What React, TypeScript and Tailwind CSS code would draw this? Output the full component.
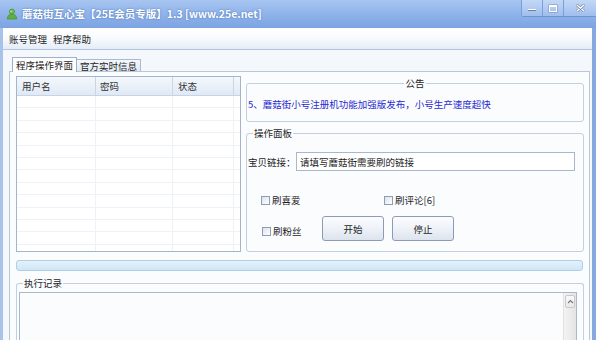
import React from "react";

const rows = Array.from({ length: 13 });

function Check({ label }: { label: string }) {
  return (
    <div className="flex items-center h-[14px]">
      <span className="w-[9px] h-[9px] border border-[#8e9db2] bg-gradient-to-br from-[#dde3eb] to-white shrink-0" />
      <span className="ml-[2px]">{label}</span>
    </div>
  );
}

function Btn({ label }: { label: string }) {
  return (
    <button className="w-[62px] h-[25px] rounded-[3px] border border-[#8d9cb4] bg-gradient-to-b from-[#fbfcfe] via-[#eef2f8] to-[#dde4ee] flex items-center justify-center text-[#1e1e1e]">
      {label}
    </button>
  );
}

export default function App() {
  return (
    <div className="w-[596px] h-[353px] bg-white overflow-hidden [font-family:'Noto_Sans_CJK_SC',sans-serif] text-[9.5px] leading-[14px] text-[#1e1e1e]">
      <div className="h-[340px] flex flex-col overflow-hidden">
        {/* title bar */}
        <div className="h-[28px] shrink-0 flex bg-gradient-to-b from-[#a7c5f1] via-[#8fb3ea] to-[#7da4e3]">
          <div className="flex items-center pl-[6px]">
            <svg width="12" height="12" viewBox="0 0 12 12">
              <circle cx="6" cy="3.6" r="2.6" fill="#6cc04a" stroke="#3f8a2a" strokeWidth="0.6" />
              <path d="M1.2 11 C1.6 7.4 3.4 6.2 6 6.2 C8.6 6.2 10.4 7.4 10.8 11 Z" fill="#5bb23c" stroke="#3f8a2a" strokeWidth="0.6" />
              <circle cx="5" cy="3.3" r="0.6" fill="#fff" />
            </svg>
            <span className="ml-[4px] text-white font-bold text-[10.5px] leading-[14px] [text-shadow:0_0_2px_#3e68ad]">
              蘑菇街互心宝【25E会员专版】1.3 [www.25e.net]
            </span>
          </div>
          <div className="ml-auto flex h-[17px] border-b border-[#6f93cc] rounded-bl-[3px] overflow-hidden">
            <div className="w-[21px] flex items-end justify-center pb-[5px] bg-gradient-to-b from-[#c3d8f6] to-[#9fbeee] border-l border-[#7b9ed6]">
              <span className="w-[8px] h-[2px] bg-white border-b border-[#6e7f99]" />
            </div>
            <div className="w-[21px] flex items-center justify-center bg-gradient-to-b from-[#c3d8f6] to-[#9fbeee] border-l border-[#7b9ed6]">
              <span className="w-[8px] h-[7px] border border-white border-t-2 shadow-[0_0_0_0.5px_#7a8ca8]" />
            </div>
            <div className="w-[33px] flex items-center justify-center bg-gradient-to-b from-[#c3d8f6] to-[#9fbeee] border-l border-[#7b9ed6]">
              <svg width="9" height="8" viewBox="0 0 9 8">
                <path d="M1 1 L8 7 M8 1 L1 7" stroke="#6d7f9b" strokeWidth="2.6" strokeLinecap="round" />
                <path d="M1 1 L8 7 M8 1 L1 7" stroke="#fff" strokeWidth="1.5" strokeLinecap="round" />
              </svg>
            </div>
          </div>
        </div>

        {/* body */}
        <div className="flex-1 min-h-0 flex flex-col bg-[#f4f7fb] border-l-[3px] border-r-[4px] border-l-[#a8c3ea] border-r-[#86a9df]">
          {/* menu */}
          <div className="h-[22px] shrink-0 flex items-center gap-[6px] pl-[6px] bg-gradient-to-b from-white via-[#f8fafd] to-[#e4ecf7] border-b border-[#b3c4de]">
            <span>账号管理</span>
            <span>程序帮助</span>
          </div>

          {/* tabs */}
          <div className="flex-1 min-h-0 flex flex-col pt-[7px] pl-[6px] pr-[2px]">
            <div className="flex items-end h-[14px] pl-[3px] shrink-0 relative z-10">
              <div className="w-[65px] h-[15px] mb-[-1px] bg-white border border-b-0 border-[#9fb1c9] flex items-center justify-center">
                程序操作界面
              </div>
              <div className="w-[64px] h-[12px] bg-gradient-to-b from-[#f4f7fb] to-[#e3eaf4] border border-l-0 border-b-0 border-[#a9b9ce] flex items-center justify-center">
                官方实时信息
              </div>
            </div>
            <div className="flex-1 min-h-0 bg-[#fbfcfe] border border-b-0 border-[#b8c7da] pt-[4px] pl-[6px] pr-[5px] flex flex-col">
              <div className="flex gap-[5px] h-[176px] shrink-0">
                {/* list view */}
                <div className="w-[225px] h-[176px] border border-[#a3b5cc] bg-white flex flex-col overflow-hidden">
                  <div className="h-[19px] shrink-0 flex bg-gradient-to-b from-[#f5f8fc] to-[#dfe9f5] border-b border-[#c6d4e5] text-[#333]">
                    <div className="w-[79px] border-r border-[#c9d6e5] pl-[5px] flex items-center">用户名</div>
                    <div className="w-[77px] border-r border-[#c9d6e5] pl-[4px] flex items-center">密码</div>
                    <div className="w-[61px] border-r border-[#c9d6e5] pl-[5px] flex items-center">状态</div>
                    <div className="flex-1" />
                  </div>
                  <div className="flex-1 overflow-hidden">
                    {rows.map((_, i) => (
                      <div key={i} className="h-[12.4px] flex border-b border-[#eef1f5]">
                        <div className="w-[79px] border-r border-[#eef1f5]" />
                        <div className="w-[77px] border-r border-[#eef1f5]" />
                        <div className="w-[61px] border-r border-[#eef1f5]" />
                        <div className="flex-1" />
                      </div>
                    ))}
                  </div>
                </div>

                {/* right column */}
                <div className="flex-1 flex flex-col">
                  <fieldset className="h-[46px] border border-[#c2cfdf] rounded-[3px] px-0 bg-[#fafcfe]">
                    <legend className="mx-auto px-[1px] leading-[14px]">公告</legend>
                    <div className="pt-[7px] pl-[1px] text-[#2a2ad0]">
                      5、蘑菇街小号注册机功能加强版发布，小号生产速度超快
                    </div>
                  </fieldset>
                  <fieldset className="mt-[4px] h-[126px] border border-[#c2cfdf] rounded-[3px] px-0 bg-[#fafcfe]">
                    <legend className="ml-[6px] px-[1px] leading-[14px]">操作面板</legend>
                    <div className="mt-[12px] flex items-center pl-[1px]">
                      <span className="w-[48px]">宝贝链接：</span>
                      <div className="w-[279px] h-[19px] border border-[#a8b8cc] bg-white flex items-center pl-[3px]">
                        请填写蘑菇街需要刷的链接
                      </div>
                    </div>
                    <div className="mt-[22px] flex pl-[14px]">
                      <div className="w-[123px]">
                        <Check label="刷喜爱" />
                      </div>
                      <Check label="刷评论[6]" />
                    </div>
                    <div className="mt-[9px] flex items-start pl-[15px]">
                      <div className="w-[60px] mt-[8px]">
                        <Check label="刷粉丝" />
                      </div>
                      <Btn label="开始" />
                      <div className="w-[8px]" />
                      <Btn label="停止" />
                    </div>
                  </fieldset>
                </div>
              </div>

              {/* progress bar */}
              <div className="mt-[8px] h-[11px] shrink-0 rounded-[3px] border border-[#add0e8] bg-gradient-to-b from-[#e3f2fb] to-[#cfe6f5] mr-[1px]" />

              {/* log */}
              <fieldset className="mt-[5px] flex-1 min-h-0 border border-b-0 border-[#c2cfdf] rounded-t-[3px] px-0 bg-[#fafcfe]">
                <legend className="ml-[6px] px-[1px] leading-[14px]">执行记录</legend>
                <div className="mt-[2px] ml-[2px] w-[558px] h-[80px] border border-[#a9b8cb] bg-[#fbfcfd] flex">
                  <div className="flex-1" />
                  <div className="w-[13px] bg-gradient-to-r from-[#f3f3f3] to-[#e4e4e4] border-l border-[#e2e2e2] pt-[2px] px-[1px]">
                    <div className="h-[13px] rounded-[2px] border border-[#c9c9c9] bg-gradient-to-b from-[#fafafa] to-[#e9e9e9] flex items-center justify-center">
                      <svg width="7" height="5" viewBox="0 0 7 5">
                        <path d="M1 4 L3.5 1.5 L6 4" stroke="#7a7a7a" strokeWidth="1.2" fill="none" />
                      </svg>
                    </div>
                  </div>
                </div>
              </fieldset>
            </div>
          </div>
        </div>
      </div>
    </div>
  );
}
